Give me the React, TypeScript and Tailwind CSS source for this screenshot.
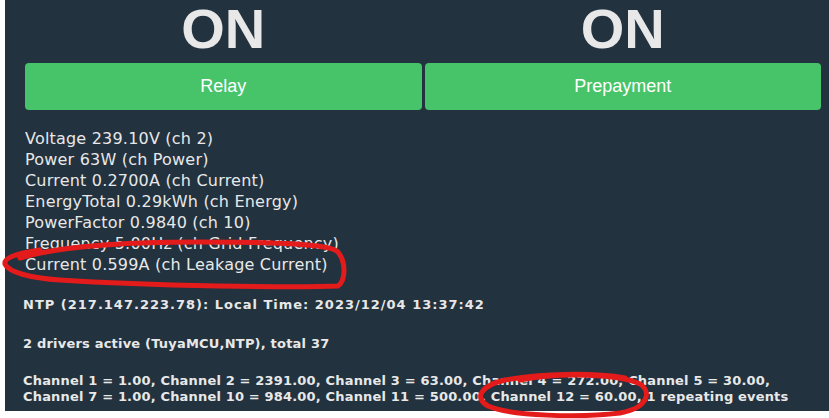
const readings = [
  'Voltage 239.10V (ch 2)',
  'Power 63W (ch Power)',
  'Current 0.2700A (ch Current)',
  'EnergyTotal 0.29kWh (ch Energy)',
  'PowerFactor 0.9840 (ch 10)',
  'Frequency 5.00Hz (ch Grid Frequency)',
  'Current 0.599A (ch Leakage Current)',
];

function Toggle({ label }: { label: string }) {
  return (
    <div className="flex flex-col">
      <div className="h-[58px] text-center font-['Liberation_Sans',Arial,sans-serif] text-[56px] font-bold leading-[58px] text-[#e8e8e8]">
        ON
      </div>
      <button className="mt-[5px] flex h-[47px] items-center justify-center rounded-[4px] bg-[#47c46a] font-['Liberation_Sans',Arial,sans-serif] text-[18px] text-white">
        {label}
      </button>
    </div>
  );
}

export default function App() {
  return (
    <div className="relative h-[418px] w-[829px] overflow-hidden bg-white pl-[5px]">
      <div className="h-[411px] bg-[#22323f] pl-[20px] pr-[8px] font-['DejaVu_Sans',Verdana,sans-serif] text-[#e8e8e8]">
        <div className="grid grid-cols-2 gap-[3px]">
          <Toggle label="Relay" />
          <Toggle label="Prepayment" />
        </div>

        <div className="mt-[18px] text-[16px] leading-[21px] tracking-[0.2px]">
          {readings.map((r, i) => (
            <div key={i}>{r}</div>
          ))}
        </div>

        <div className="-ml-[2px] whitespace-nowrap text-[13px] font-bold leading-[16px]">
          <p className="mt-[22px] tracking-[1px]">NTP (217.147.223.78): Local Time: 2023/12/04 13:37:42</p>
          <p className="mt-[23px] tracking-[0.2px]">2 drivers active (TuyaMCU,NTP), total 37</p>
          <p className="mt-[21px] tracking-[0.17px]">
            Channel 1 = 1.00, Channel 2 = 2391.00, Channel 3 = 63.00, Channel 4 = 272.00, Channel 5 = 30.00,
            <br />
            Channel 7 = 1.00, Channel 10 = 984.00, Channel 11 = 500.00, Channel 12 = 60.00, 1 repeating events
          </p>
        </div>
      </div>

      {/* red marker annotations drawn over the screenshot */}
      <svg
        className="pointer-events-none absolute inset-0"
        width="829"
        height="418"
        viewBox="0 0 829 418"
        fill="none"
      >
        <path
          d="M 20 258 C 60 246, 120 242, 200 242 C 280 242, 330 244, 338 252 C 346 262, 346 280, 338 286 C 300 288, 150 286, 60 280 C 30 278, 8 272, 5 264 C 4 258, 14 254, 40 250"
          stroke="#e41b1b"
          strokeWidth="5"
          strokeLinecap="round"
        />
        <path
          d="M 520 380 C 560 372, 620 374, 640 384 C 652 392, 648 408, 620 413 C 580 418, 510 416, 488 406 C 474 398, 480 386, 505 380 C 540 374, 590 372, 625 378"
          stroke="#e41b1b"
          strokeWidth="5"
          strokeLinecap="round"
        />
      </svg>
    </div>
  );
}
